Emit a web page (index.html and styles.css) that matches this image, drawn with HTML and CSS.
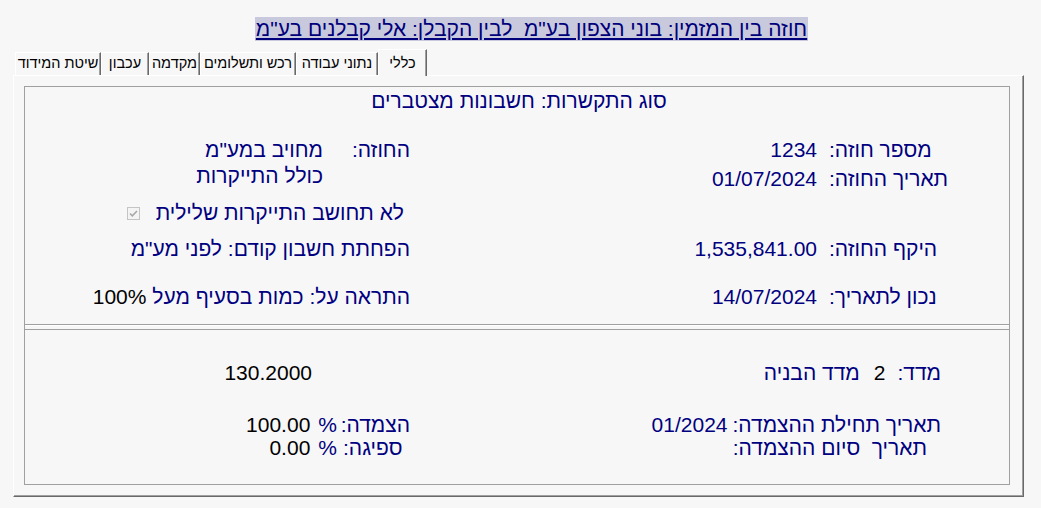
FILE: index.html
```html
<!DOCTYPE html>
<html lang="he" dir="rtl">
<head>
<meta charset="utf-8">
<link rel="stylesheet" href="styles.css">
</head>
<body>
<div class="title-wrap"><span class="title">חוזה בין המזמין: בוני הצפון בע"מ&nbsp; לבין הקבלן: אלי קבלנים בע"מ</span></div>
<div class="tabs">
  <div class="tab active t1">כללי</div>
  <div class="tab t2">נתוני עבודה</div>
  <div class="tab t3">רכש ותשלומים</div>
  <div class="tab t4">מקדמה</div>
  <div class="tab t5">עכבון</div>
  <div class="tab t6">שיטת המידוד</div>
</div>
<div class="panel">
  <div class="group">
    <div class="top">
      <div class="heading">סוג התקשרות: חשבונות מצטברים</div>
      <div class="row r1">
        <div class="rhalf"><span class="rlabel">מספר חוזה:</span><span class="val">1234</span></div>
        <div class="lhalf"><span class="llabel">החוזה:</span><span class="val">מחויב במע"מ</span></div>
      </div>
      <div class="row r2">
        <div class="rhalf"><span class="rlabel">תאריך החוזה:</span><span class="val">01/07/2024</span></div>
        <div class="lhalf"><span class="val indent">כולל התייקרות</span></div>
      </div>
      <div class="row r3">
        <div class="rhalf"></div>
        <div class="lhalf"><span class="val chk-text">לא תחושב התייקרות שלילית</span><span class="chk"><svg width="11" height="11" viewBox="0 0 11 11"><path d="M2 5.5 L4.3 7.8 L9 3" fill="none" stroke="#a8a8a8" stroke-width="1.6"/></svg></span></div>
      </div>
      <div class="row r4">
        <div class="rhalf"><span class="rlabel">היקף החוזה:</span><span class="val">1,535,841.00</span></div>
        <div class="lhalf"><span class="val">הפחתת חשבון קודם: לפני מע"מ</span></div>
      </div>
      <div class="row r5">
        <div class="rhalf"><span class="rlabel">נכון לתאריך:</span><span class="val">14/07/2024</span></div>
        <div class="lhalf"><span class="val">התראה על: כמות בסעיף מעל <span class="blk">100%</span></span></div>
      </div>
    </div>
    <div class="sep"></div>
    <div class="bottom">
      <div class="row b1">
        <div class="rhalf idx"><span>מדד:</span><span class="blk">2</span><span>מדד הבניה</span></div>
        <div class="lhalf"><span class="blk idxval">130.2000</span></div>
      </div>
      <div class="row b2">
        <div class="rhalf lnk"><span>תאריך תחילת ההצמדה:</span><span>01/2024</span></div>
        <div class="lhalf pct"><span class="plabel">הצמדה:</span><span class="pc">%</span><span class="blk">100.00</span></div>
      </div>
      <div class="row b3">
        <div class="rhalf end"><span>תאריך&nbsp; סיום ההצמדה:</span></div>
        <div class="lhalf pct"><span class="plabel">ספיגה:</span><span class="pc">%</span><span class="blk">0.00</span></div>
      </div>
    </div>
  </div>
</div>
</body>
</html>
```
FILE: styles.css
```css
html, body {
  margin: 0;
  padding: 0;
}
body {
  background: #f7f7f7;
  font-family: "Liberation Sans", Arial, sans-serif;
  color: #000080;
  width: 1041px;
  height: 508px;
  overflow: hidden;
}
.title-wrap {
  text-align: center;
  margin-top: 17px;
  height: 24px;
  line-height: 24px;
  padding-left: 22px;
}
.title {
  background: #c9c9dd;
  color: #00007a;
  text-decoration: underline;
  font-size: 21px;
  display: inline-block;
  height: 24px;
  padding: 0 1px;
}
.tabs {
  display: flex;
  justify-content: flex-end;
  align-items: flex-end;
  padding-left: 15px;
  margin-top: 8px;
  height: 26px;
  position: relative;
  z-index: 2;
}
.tab {
  box-sizing: border-box;
  height: 23px;
  border-top: 1px solid #ffffff;
  border-left: 1px solid #ffffff;
  border-right: 1px solid #696969;
  box-shadow: inset -1px 0 #a0a0a0;
  font-size: 14.5px;
  color: #000;
  text-align: center;
  line-height: 21px;
  background: #f7f7f7;
  white-space: nowrap;
}
.tab.active {
  height: 27px;
  margin-bottom: -1px;
  line-height: 26px;
}
.t1 { width: 49px; }
.t2 { width: 82px; }
.t3 { width: 96px; }
.t4 { width: 51px; }
.t5 { width: 48px; }
.t6 { width: 86px; }
.panel {
  box-sizing: border-box;
  margin-right: 17px;
  width: 1011px;
  height: 422px;
  border-top: 1px solid #ffffff;
  border-left: 1px solid #ffffff;
  border-right: 1px solid #696969;
  border-bottom: 1px solid #696969;
  box-shadow: inset -1px -1px #a0a0a0;
  padding: 10px 13px 0 0;
}
.group {
  box-sizing: border-box;
  width: 986px;
  height: 399px;
  border: 1px solid #a0a0a0;
  font-size: 21px;
  line-height: 24px;
}
.top {
  height: 237px;
  padding-top: 2px;
  box-sizing: border-box;
}
.heading {
  text-align: center;
  height: 24px;
  margin-bottom: 25px;
  padding-left: 4px;
}
.row {
  display: flex;
  height: 24px;
}
.r1 { height: 29px; }
.r2 { height: 34px; }
.r3 { height: 36px; }
.r4 { height: 48px; }
.rhalf, .lhalf {
  width: 492px;
  display: flex;
  align-items: center;
  height: 24px;
}
.rhalf { padding-right: 59px; box-sizing: border-box; }
.lhalf { padding-right: 107px; box-sizing: border-box; }
.rlabel {
  width: 121px;
  text-align: left;
  margin-left: 12px;
  white-space: nowrap;
}
.llabel {
  width: 57px;
  margin-left: 30px;
  white-space: nowrap;
}
.val { white-space: nowrap; }
.indent { margin-right: 87px; }
.r2 .lhalf { margin-top: -3px; }
.chk-text { margin-right: 6px; }
.chk {
  box-sizing: border-box;
  width: 13px;
  height: 13px;
  border: 1px solid #c4c4c4;
  background: #f4f4f4;
  margin-right: 16px;
  display: flex;
  align-items: center;
  justify-content: center;
}
.blk { color: #000; }
.sep {
  height: 4px;
  border-top: 1px solid #a0a0a0;
  border-bottom: 1px solid #a0a0a0;
  box-shadow: inset 0 1px #ffffff;
}
.bottom {
  padding-top: 31px;
}
.b1 { height: 52px; }
.b2 { height: 23px; }
.idx { padding-right: 68px; }
.idx span:nth-child(2) { margin-right: 12px; }
.idx span:nth-child(3) { margin-right: 14px; }
.idxval { margin-right: 98px; }
.lnk { padding-right: 68px; }
.lnk span:nth-child(2) { margin-right: 5px; }
.end { padding-right: 82px; }
.plabel {
  width: 67px;
  text-align: left;
  white-space: nowrap;
}
.pc { margin-right: 6px; }
.pct .blk { margin-right: 8px; }
```
